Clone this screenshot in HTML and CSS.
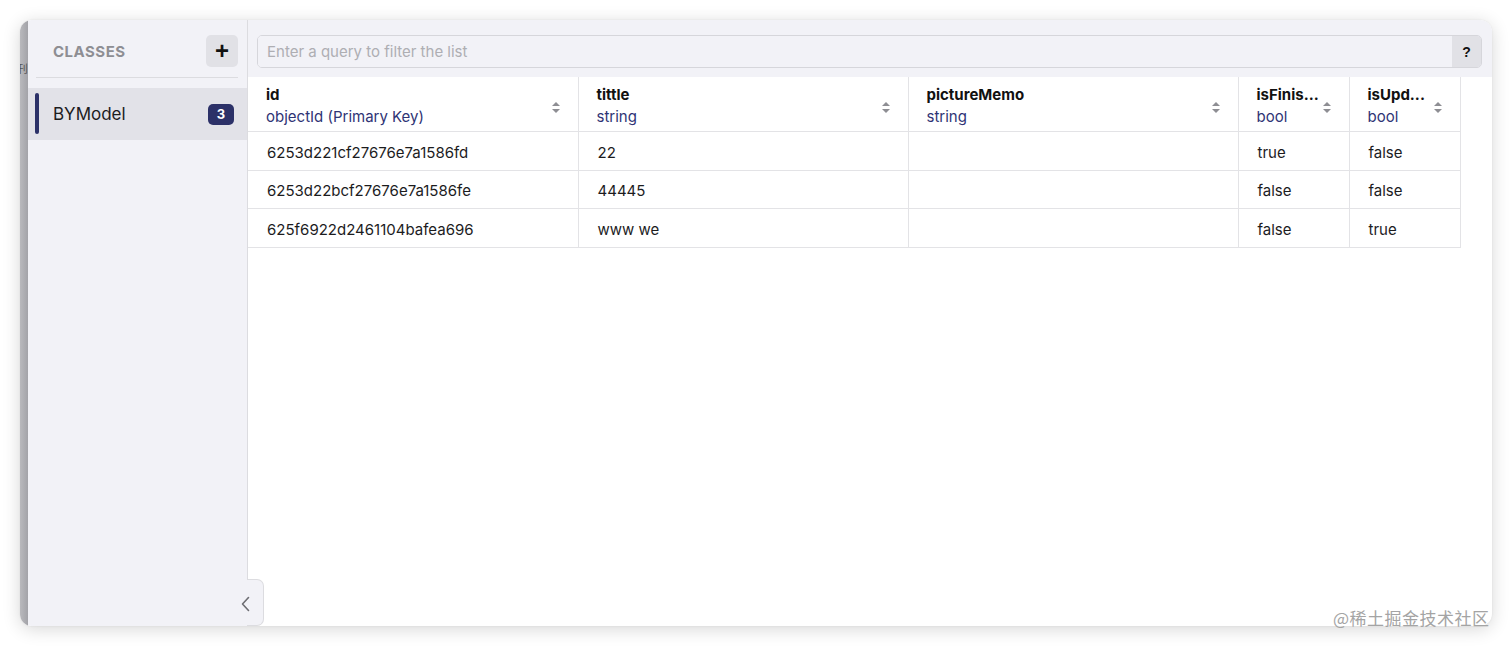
FILE: index.html
```html
<!DOCTYPE html>
<html lang="en">
<head>
  <meta charset="UTF-8">
  <title>Browser - BYModel</title>
  <link rel="stylesheet" href="styles.css">
</head>
<body>
  <div class="window">
    <div class="behind"><span>刊</span></div>

    <aside class="sidebar">
      <div class="side-head">
        <span class="side-title">CLASSES</span>
        <button class="add-btn">+</button>
      </div>
      <div class="class-list">
        <div class="class-item active">
          <span class="class-name">BYModel</span>
          <span class="badge">3</span>
        </div>
      </div>
      <div class="collapse-tab">
        <svg width="10" height="16" viewBox="0 0 10 16"><path d="M7.5 1.5 L1.5 8 L7.5 14.5" fill="none" stroke="#6e6e73" stroke-width="1.6" stroke-linecap="round" stroke-linejoin="round"/></svg>
      </div>
    </aside>

    <section class="main">
      <div class="toolbar">
        <div class="search">
          <input type="text" placeholder="Enter a query to filter the list">
          <button class="help-btn">?</button>
        </div>
      </div>

      <div class="table-wrap">
        <table class="data">
          <colgroup>
            <col class="col-wide">
            <col class="col-wide">
            <col class="col-wide">
            <col class="col-small">
            <col class="col-small">
          </colgroup>
          <thead>
            <tr>
              <th><div class="th-inner"><div class="th-text"><b>id</b><span>objectId (Primary Key)</span></div><i class="sort"></i></div></th>
              <th><div class="th-inner"><div class="th-text"><b>tittle</b><span>string</span></div><i class="sort"></i></div></th>
              <th><div class="th-inner"><div class="th-text"><b>pictureMemo</b><span>string</span></div><i class="sort"></i></div></th>
              <th><div class="th-inner"><div class="th-text"><b>isFinis...</b><span>bool</span></div><i class="sort"></i></div></th>
              <th><div class="th-inner"><div class="th-text"><b>isUpd...</b><span>bool</span></div><i class="sort"></i></div></th>
            </tr>
          </thead>
          <tbody>
            <tr><td>6253d221cf27676e7a1586fd</td><td>22</td><td></td><td>true</td><td>false</td></tr>
            <tr><td>6253d22bcf27676e7a1586fe</td><td>44445</td><td></td><td>false</td><td>false</td></tr>
            <tr><td>625f6922d2461104bafea696</td><td>www we</td><td></td><td>false</td><td>true</td></tr>
          </tbody>
        </table>
      </div>
    </section>
  </div>

  <div class="watermark">@稀土掘金技术社区</div>
</body>
</html>
```

FILE: styles.css
```css
body {
  margin: 0;
  padding: 0;
  background: #fff;
  font-family: Inter, "Noto Sans", sans-serif;
  color: #1c1c1e;
}
.window {
  margin: 20px;
  width: 1472px;
  height: 606px;
  display: flex;
  border-radius: 12px;
  overflow: hidden;
  background: #fff;
  box-shadow: 0 3px 18px rgba(0, 0, 0, 0.16), 0 0 2px rgba(0, 0, 0, 0.08);
}
.behind {
  width: 8px;
  flex: none;
  background: linear-gradient(to right, #b9b9bd, #a3a3a8);
  position: relative;
}
.behind span {
  position: absolute;
  left: -3px;
  top: 40px;
  font-size: 11px;
  color: #555;
  font-family: "Noto Sans CJK SC", sans-serif;
}
.sidebar {
  width: 219px;
  flex: none;
  background: #f2f2f7;
  border-right: 1px solid #dcdce0;
  position: relative;
  display: flex;
  flex-direction: column;
}
.side-head {
  height: 58px;
  box-sizing: border-box;
  margin: 0 9px 0 8px;
  padding: 6px 0 0 17px;
  border-bottom: 1px solid #dcdce0;
  display: flex;
  align-items: center;
  justify-content: space-between;
}
.side-title {
  font-size: 15px;
  font-weight: 700;
  color: #8e8e93;
  letter-spacing: 0.5px;
}
.add-btn {
  width: 32px;
  height: 32px;
  margin-top: -2px;
  border: none;
  border-radius: 5px;
  background: #e1e1e6;
  font-family: "Liberation Sans", sans-serif;
  font-size: 24px;
  font-weight: 700;
  line-height: 30px;
  color: #111;
  padding: 0;
}
.class-list {
  padding-top: 10px;
}
.class-item {
  height: 52px;
  display: flex;
  align-items: center;
  justify-content: space-between;
  padding: 0 13px 0 25px;
  position: relative;
}
.class-item.active {
  background: #e2e2e8;
}
.class-item.active::before {
  content: "";
  position: absolute;
  left: 7px;
  top: 5px;
  bottom: 6px;
  width: 4px;
  border-radius: 2px;
  background: #2c3168;
}
.class-name {
  font-size: 17px;
  color: #1c1c1e;
}
.badge {
  min-width: 26px;
  height: 21px;
  border-radius: 5px;
  background: #2c3168;
  color: #fff;
  font-size: 13px;
  font-weight: 700;
  line-height: 21px;
  text-align: center;
  margin-top: 1px;
}
.collapse-tab {
  position: absolute;
  right: -17px;
  bottom: 0;
  width: 16px;
  height: 45px;
  background: #f2f2f7;
  border: 1px solid #dcdce0;
  border-left: none;
  border-radius: 0 7px 7px 0;
}
.collapse-tab svg {
  position: absolute;
  left: -6px;
  top: 16px;
}
.main {
  flex: 1;
  display: flex;
  flex-direction: column;
  min-width: 0;
}
.toolbar {
  height: 57px;
  background: #f2f2f7;
  padding: 15px 10px 0 9px;
  box-sizing: border-box;
}
.search {
  display: flex;
  height: 33px;
  border: 1px solid #d6d6db;
  border-radius: 5px;
  overflow: hidden;
  box-sizing: border-box;
}
.search input {
  flex: 1;
  border: none;
  background: #f2f2f7;
  padding: 0 9px;
  font-family: Inter, "Noto Sans", sans-serif;
  font-size: 15px;
  outline: none;
}
.search input::placeholder {
  color: #aeaeb3;
}
.help-btn {
  width: 29px;
  border: none;
  background: #e1e1e6;
  font-family: "Liberation Sans", sans-serif;
  font-size: 14px;
  font-weight: 700;
  color: #111;
  padding: 0;
}
.table-wrap {
  flex: 1;
}
.data {
  border-collapse: collapse;
  table-layout: fixed;
  width: 1212px;
}
.col-wide {
  width: 330px;
}
.col-small {
  width: 111px;
}
.data th, .data td {
  border: 1px solid #e3e3e6;
  border-top: none;
  text-align: left;
}
.data th:first-child, .data td:first-child {
  border-left: none;
}
.data th {
  padding: 7px 18px 3px 18px;
  height: 44px;
}
.th-inner {
  display: flex;
  align-items: center;
  justify-content: space-between;
}
.th-text {
  display: flex;
  flex-direction: column;
  min-width: 0;
}
.th-text b {
  font-size: 15px;
  font-weight: 700;
  line-height: 22px;
  color: #111;
  white-space: nowrap;
}
.th-text span {
  font-size: 15px;
  font-weight: 400;
  line-height: 22px;
  color: #2f3475;
  white-space: nowrap;
}
.sort {
  width: 8px;
  height: 11px;
  flex: none;
  position: relative;
  margin-top: 2px;
}
.sort::before, .sort::after {
  content: "";
  position: absolute;
  left: 0;
  border-left: 4px solid transparent;
  border-right: 4px solid transparent;
}
.sort::before {
  top: 0;
  border-bottom: 4px solid #8e8e93;
}
.sort::after {
  bottom: 0;
  border-top: 4px solid #8e8e93;
}
.data td {
  height: 34.5px;
  padding: 3px 18px 0 19px;
  font-size: 15px;
  color: #1c1c1e;
  white-space: nowrap;
}
.watermark {
  position: absolute;
  left: 1333px;
  top: 605px;
  font-family: "Noto Sans CJK SC", sans-serif;
  font-size: 17px;
  color: #a4a4a4;
  letter-spacing: 0.5px;
}
```
